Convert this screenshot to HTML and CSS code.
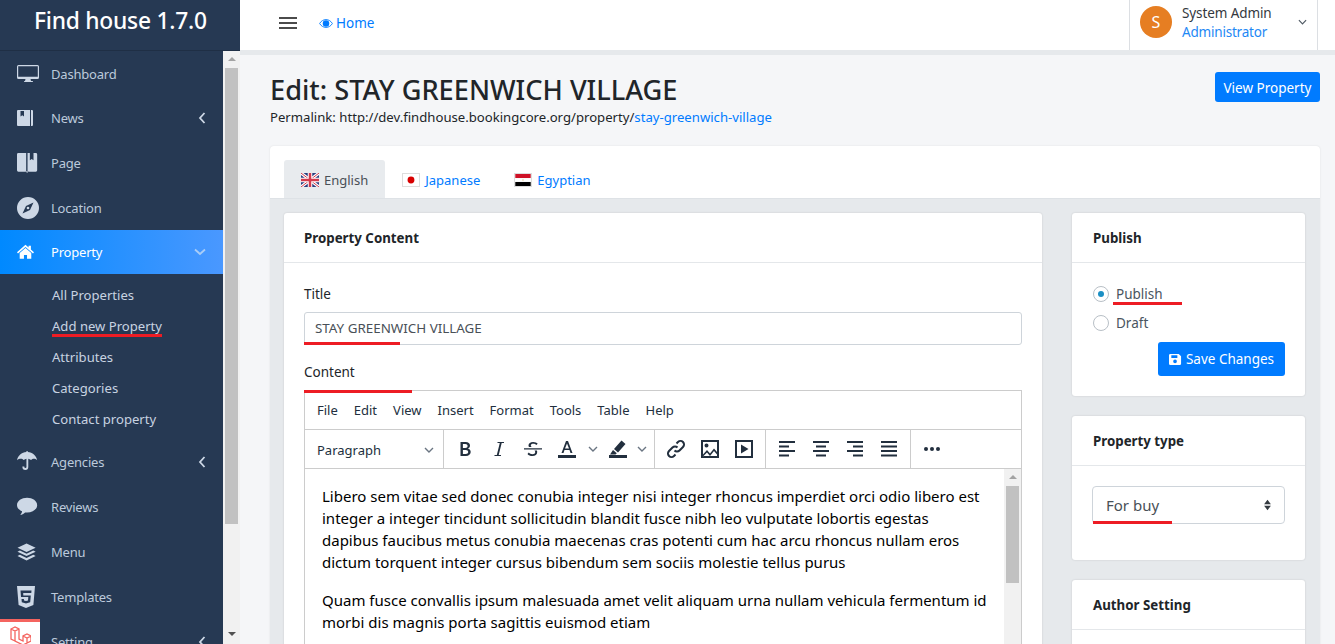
FILE: index.html
```html
<!DOCTYPE html>
<html lang="en">
<head>
  <meta charset="UTF-8">
  <title>Edit: STAY GREENWICH VILLAGE</title>
  <link rel="stylesheet" href="styles.css">
</head>
<body>
<div class="page">
  <!-- Sidebar -->
  <aside class="sidebar">
    <div class="brand">Find house 1.7.0</div>
    <div class="side-body">
      <nav class="side-nav">
        <a class="nav-item">
          <svg class="nav-icon" viewBox="0 0 22 18"><path fill-rule="evenodd" d="M1.500 0h19A1.500 1.500 0 0 1 22 1.500v11a1.500 1.500 0 0 1-1.500 1.500h-7l.5 2h1.500a.5.5 0 0 1 0 1h-8a.5.5 0 0 1 0-1H8l.5-2h-7A1.500 1.500 0 0 1 0 12.500v-11A1.500 1.500 0 0 1 1.500 0zM1.200 1.200v10.600h19.600V1.200z"/></svg>
          <span>Dashboard</span>
        </a>
        <a class="nav-item">
          <svg class="nav-icon" viewBox="0 -3 22 22"><path fill-rule="evenodd" d="M1 0h12v16H1a1 1 0 0 1-1-1V1a1 1 0 0 1 1-1zm2.500 1v5.500l1.800-1.300L7 6.500V1zM14 0h1a1 1 0 0 1 1 1v14a1 1 0 0 1-1 1h-1z"/></svg>
          <span>News</span>
          <svg class="nav-arrow" viewBox="0 0 8 12"><path d="M6.500 1 2 6l4.500 5"/></svg>
        </a>
        <a class="nav-item">
          <svg class="nav-icon" viewBox="0 -1 24 24"><path fill-rule="evenodd" d="M1.500 0H10v20.500H1.500A1.500 1.500 0 0 1 0 19V1.500A1.500 1.500 0 0 1 1.500 0zM11.500 0H14v8l2-1.500L18 8V0h2.500A1.500 1.500 0 0 1 22 1.500V19a1.500 1.500 0 0 1-1.500 1.500h-9zM9.500 20h3l-1.500 2z"/></svg>
          <span>Page</span>
        </a>
        <a class="nav-item">
          <svg class="nav-icon" viewBox="0 0 22 22"><path fill-rule="evenodd" d="M11 0a11 11 0 1 1 0 22 11 11 0 0 1 0-22zM16.500 5.500 9 9l-3.500 7.500L13 13z"/><circle cx="11" cy="11" r="1.300"/></svg>
          <span>Location</span>
        </a>
        <a class="nav-item nav-item-active">
          <svg class="nav-icon" viewBox="0 -5 28.500 28.500"><path d="M11 0 15 3.400V1h3v5.100l4 3.500-1.300 1.500L11 2.800 1.300 11.100 0 9.600zM3.500 10.600 11 4.200l7.500 6.400V18H13v-5H9v5H3.500z"/></svg>
          <span>Property</span>
          <svg class="nav-arrow nav-arrow-open" viewBox="0 0 12 8"><path d="M1 1.500 6 6l5-4.500"/></svg>
        </a>
        <div class="sub-nav">
          <a>All Properties</a>
          <a class="marked">Add new Property</a>
          <a>Attributes</a>
          <a>Categories</a>
          <a>Contact property</a>
        </div>
        <a class="nav-item">
          <svg class="nav-icon" viewBox="0 0 24 24"><path d="M10.300 0h1.400v1.100C17 1.500 21 5 22 10c-1-1-2.500-1.500-3.700-1.500-1.100 0-2 .4-3 1.400-1-1-2-1.400-3-1.500v9.100a3.200 3.200 0 0 1-6.400 0v-.7H8v.7a1.100 1.100 0 0 0 2.300 0V8.400c-1 .1-2 .5-3 1.500-1-1-1.900-1.400-3-1.400C3 8.500 1 9 0 10 1 5 5 1.500 10.300 1.100z"/></svg>
          <span>Agencies</span>
          <svg class="nav-arrow" viewBox="0 0 8 12"><path d="M6.500 1 2 6l4.500 5"/></svg>
        </a>
        <a class="nav-item">
          <svg class="nav-icon" viewBox="0 -2 24 24"><path d="M11 0c6 0 11 3.500 11 8s-5 8-11 8c-.7 0-1.500 0-2.200-.1C7.200 17.600 5.300 18.400 3.500 18.700c1-1 1.800-2.200 2-4C2.300 13.300 0 10.800 0 8c0-4.500 5-8 11-8z"/></svg>
          <span>Reviews</span>
        </a>
        <a class="nav-item">
          <svg class="nav-icon" viewBox="0 -2.500 23 23"><path d="M10 0l9.500 4.500L10 9 .5 4.500zM3 7.500l7 3.300 7-3.300 2.500 1.300L10 13.300.5 8.800zM3 12l7 3.300 7-3.300 2.500 1.200L10 17.800.5 13.200z"/></svg>
          <span>Menu</span>
        </a>
        <a class="nav-item">
          <svg class="nav-icon" viewBox="2 0 20 22"><path fill-rule="evenodd" d="M1 0h18l-1.600 19L10 22l-7.400-3zM15.500 4.500h-11l.5 6.500h7.300l-.3 3.400-2 .6-2-.6-.1-1.500H5.500l.3 3.300 4.200 1.200 4.200-1.200.6-6.800H7.300l-.1-2.300h8.100z"/></svg>
          <span>Templates</span>
        </a>
        <a class="nav-item">
          <svg class="nav-icon" viewBox="0 0 22 22"><circle cx="11" cy="11" r="10"/></svg>
          <span>Setting</span>
          <svg class="nav-arrow" viewBox="0 0 8 12"><path d="M6.500 1 2 6l4.500 5"/></svg>
        </a>
      </nav>
      <div class="side-scroll">
        <span class="scroll-up"></span>
        <span class="scroll-thumb"></span>
        <span class="scroll-down"></span>
      </div>
    </div>
  </aside>

  <!-- Main column -->
  <div class="main">
    <header class="topbar">
      <button class="burger"><span></span><span></span><span></span></button>
      <a class="home-link">
        <svg class="eye" viewBox="0 0 16 12"><path class="eye-rim" d="M.7 6C2.400 3.200 5 1.500 8 1.500s5.600 1.700 7.300 4.500c-1.700 2.800-4.300 4.500-7.300 4.500S2.400 8.800.7 6z"/><circle cx="8" cy="6" r="3.700"/></svg>
        Home
      </a>
      <div class="user-box">
        <span class="avatar">S</span>
        <div class="user-text">
          <div class="user-name">System Admin</div>
          <div class="user-role">Administrator</div>
        </div>
        <svg class="user-caret" viewBox="0 0 10 6"><path d="M1 1l4 4 4-4"/></svg>
      </div>
    </header>

    <div class="content">
      <div class="page-head">
        <div>
          <h1>Edit: STAY GREENWICH VILLAGE</h1>
          <div class="permalink">Permalink: http://dev.findhouse.bookingcore.org/property/<a>stay-greenwich-village</a></div>
        </div>
        <button class="btn view-btn">View Property</button>
      </div>

      <div class="lang-card">
        <div class="tabs">
          <a class="tab tab-active">
            <svg class="flag" viewBox="0 0 18 14"><rect width="18" height="14" fill="#2b3f80"/><path d="M0 0l18 14M18 0 0 14" stroke="#fff" stroke-width="3"/><path d="M0 0l18 14M18 0 0 14" stroke="#d3394c" stroke-width="1"/><path d="M9 0v14M0 7h18" stroke="#fff" stroke-width="4.500"/><path d="M9 0v14M0 7h18" stroke="#d3394c" stroke-width="2.500"/></svg>
            English
          </a>
          <a class="tab">
            <svg class="flag flag-box" viewBox="0 0 18 14"><rect width="18" height="14" fill="#fff"/><circle cx="9" cy="7" r="4" fill="#d80000"/></svg>
            Japanese
          </a>
          <a class="tab">
            <svg class="flag flag-box" viewBox="0 0 18 14"><rect width="18" height="14" fill="#fff"/><rect width="18" height="4.700" fill="#ce1126"/><rect y="9.300" width="18" height="4.700" fill="#000"/><rect x="8.500" y="6" width="1" height="2" fill="#e0c080"/></svg>
            Egyptian
          </a>
        </div>

        <div class="tab-panel">
          <div class="col-main">
            <section class="card">
              <div class="card-head">Property Content</div>
              <div class="card-body">
                <label class="field-label">Title</label>
                <div class="input-wrap">
                  <div class="text-input">STAY GREENWICH VILLAGE</div>
                  <span class="mark mark-title"></span>
                </div>
                <label class="field-label content-label">Content</label>
                <div class="editor">
                  <span class="mark mark-content"></span>
                  <div class="menubar">
                    <span>File</span><span>Edit</span><span>View</span><span>Insert</span><span>Format</span><span>Tools</span><span>Table</span><span>Help</span>
                  </div>
                  <div class="toolbar">
                    <div class="tool-group format-group">
                      <span>Paragraph</span>
                      <svg class="tool-caret" viewBox="0 0 10 6"><path d="M1 1l4 4 4-4"/></svg>
                    </div>
                    <div class="tool-group style-group">
                      <svg class="tool" viewBox="0 0 24 24"><path class="solid" fill-rule="evenodd" d="M7.500 5h5.200c2.600 0 4.300 1.400 4.300 3.500 0 1.500-.8 2.600-2.100 3.100 1.700.4 2.800 1.700 2.800 3.500 0 2.400-1.900 3.900-4.800 3.900H7.500zm2.400 2v4h2.400c1.500 0 2.300-.7 2.300-2s-.8-2-2.300-2zm0 6v4h2.800c1.600 0 2.500-.7 2.500-2s-.9-2-2.500-2z"/></svg>
                      <svg class="tool" viewBox="0 0 24 24"><path class="solid" d="M10.500 5H17v1h-2.300l-3 12H14v1H7.500v-1h2.300l3-12h-2.300z"/></svg>
                      <svg class="tool" viewBox="0 0 24 24"><path class="solid" d="M3 11.200h18v1.400H3zM12.200 5c2 0 3.500.7 4.500 1.800l-1.300 1.300c-.8-.9-1.900-1.400-3.200-1.400-1.500 0-2.400.7-2.400 1.700 0 .7.300 1.100.9 1.500H8c-.3-.5-.5-1-.5-1.700C7.500 6.400 9.400 5 12.200 5zm3.700 8.500c.2.400.3.900.3 1.400 0 2.400-1.900 4.100-4.800 4.100-2.100 0-3.800-.8-4.900-2.100l1.300-1.300c.9 1 2.100 1.600 3.600 1.600 1.700 0 2.800-.8 2.800-2 0-.7-.2-1.200-.7-1.700z"/></svg>
                      <svg class="tool tool-narrow" viewBox="0 0 24 24"><path class="solid" fill-rule="evenodd" d="M3 18h18v3H3zM11 4h2l4.500 12h-2l-1-3H9.500l-1 3h-2zm1 2.500L10 11.500h4z"/></svg>
                      <svg class="tool-caret small" viewBox="0 0 10 6"><path d="M1 1l4 4 4-4"/></svg>
                      <svg class="tool tool-narrow" viewBox="0 0 24 24"><path class="solid" d="M3 18h18v3H3zM15.500 3.500l4 3.500-7.500 8.500-4-3.500zM7 13l3.800 3.300-1.300 1.200H4z"/></svg>
                      <svg class="tool-caret small" viewBox="0 0 10 6"><path d="M1 1l4 4 4-4"/></svg>
                    </div>
                    <div class="tool-group insert-group">
                      <svg class="tool" viewBox="0 0 24 24"><path class="line" d="M10.500 13.500a3.500 3.500 0 0 0 5 0l3.500-3.500a3.500 3.500 0 0 0-5-5l-1.500 1.500M13.500 10.500a3.500 3.500 0 0 0-5 0L5 14a3.500 3.500 0 0 0 5 5l1.500-1.500"/></svg>
                      <svg class="tool" viewBox="0 0 24 24"><path class="solid" fill-rule="evenodd" d="M3 3h18v18H3zm2 2v12.500l4-4.500 3 3.500 4-5 3 3.500V5zm0 14h14v-1.500l-3-3.500-4 5-3-3.500-4 4zM8.500 6.500a2 2 0 1 1 0 4 2 2 0 0 1 0-4z"/></svg>
                      <svg class="tool" viewBox="0 0 24 24"><path class="solid" fill-rule="evenodd" d="M3 3h18v18H3zm2 2v14h14V5zm4 2.500L16.500 12 9 16.500z"/></svg>
                    </div>
                    <div class="tool-group align-group">
                      <svg class="tool" viewBox="0 0 24 24"><path class="solid" d="M4 4h16v2H4zM4 8.500h10v2H4zM4 13h16v2H4zM4 17.500h10v2H4z"/></svg>
                      <svg class="tool" viewBox="0 0 24 24"><path class="solid" d="M4 4h16v2H4zM7 8.500h10v2H7zM4 13h16v2H4zM7 17.500h10v2H7z"/></svg>
                      <svg class="tool" viewBox="0 0 24 24"><path class="solid" d="M4 4h16v2H4zM10 8.500h10v2H10zM4 13h16v2H4zM10 17.500h10v2H10z"/></svg>
                      <svg class="tool" viewBox="0 0 24 24"><path class="solid" d="M4 4h16v2H4zM4 8.500h16v2H4zM4 13h16v2H4zM4 17.500h16v2H4z"/></svg>
                    </div>
                    <div class="tool-group more-group">
                      <svg class="tool" viewBox="0 0 24 24"><circle class="solid" cx="6" cy="12" r="2"/><circle class="solid" cx="12" cy="12" r="2"/><circle class="solid" cx="18" cy="12" r="2"/></svg>
                    </div>
                  </div>
                  <div class="edit-area">
                    <div class="edit-text">
                      <p>Libero sem vitae sed donec conubia integer nisi integer rhoncus imperdiet orci odio libero est<br>integer a integer tincidunt sollicitudin blandit fusce nibh leo vulputate lobortis egestas<br>dapibus faucibus metus conubia maecenas cras potenti cum hac arcu rhoncus nullam eros<br>dictum torquent integer cursus bibendum sem sociis molestie tellus purus</p>
                      <p>Quam fusce convallis ipsum malesuada amet velit aliquam urna nullam vehicula fermentum id<br>morbi dis magnis porta sagittis euismod etiam</p>
                    </div>
                    <div class="edit-scroll">
                      <span class="scroll-up"></span>
                      <span class="scroll-thumb"></span>
                    </div>
                  </div>
                </div>
              </div>
            </section>
          </div>

          <div class="col-side">
            <section class="card publish-card">
              <div class="card-head">Publish</div>
              <div class="card-body publish-body">
                <div class="radio-row"><span class="radio radio-on"></span><span class="radio-label">Publish<span class="mark mark-publish"></span></span></div>
                <div class="radio-row"><span class="radio"></span><span class="radio-label">Draft</span></div>
                <div class="save-row">
                  <button class="btn save-btn">
                    <svg class="save-icon" viewBox="0 0 14 14"><path fill-rule="evenodd" d="M1.500 1H10.500L13 3.500V11.500A1.500 1.500 0 0 1 11.500 13h-10A1.500 1.500 0 0 1 0 11.500v-9A1.500 1.500 0 0 1 1.500 1zM2.500 2.500v3h6.500v-3zM6.500 7a2 2 0 1 0 0 4 2 2 0 0 0 0-4z"/></svg>
                    Save Changes
                  </button>
                </div>
              </div>
            </section>
            <section class="card type-card">
              <div class="card-head">Property type</div>
              <div class="card-body">
                <div class="select-box">
                  <span>For buy</span>
                  <svg class="select-arrows" viewBox="0 0 10 14"><path d="M5 1l4 5H1zM5 13 1 8h8z"/></svg>
                  <span class="mark mark-select"></span>
                </div>
              </div>
            </section>
            <section class="card author-card">
              <div class="card-head">Author Setting</div>
              <div class="card-body"></div>
            </section>
          </div>
        </div>
      </div>
    </div>
  </div>

  <!-- Debug bar tab, sits over the sidebar -->
  <div class="debug-tab">
    <svg viewBox="1 0 22 22"><path d="M3 3l4-2 4 2v10l4 2 0-5 4-2 4 2v5l-8 4-8-4-4-2zM3 3l4 2 4-2M7 5v10l8 4M15 10l4 2 4-2M19 12v5"/></svg>
  </div>
</div>
</body>
</html>
```

FILE: styles.css
```css
* {
  box-sizing: border-box;
}
html, body {
  margin: 0;
  height: 100%;
  overflow: hidden;
}
body {
  font-family: "Noto Sans", Arial, sans-serif;
  font-size: 13.5px;
  color: #212529;
  background-color: #f5f6f8;
}
a {
  color: #007bff;
  text-decoration: none;
}
.page {
  display: flex;
  height: 644px;
  position: relative;
  overflow: hidden;
}

/* Sidebar */
.sidebar {
  width: 240px;
  flex: none;
  background-color: #263953;
  display: flex;
  flex-direction: column;
}
.brand {
  height: 51px;
  flex: none;
  padding: 5px 34px 0;
  color: #fff;
  font-size: 22.800px;
  font-weight: 500;
  letter-spacing: -0.25px;
  white-space: nowrap;
  border-bottom: 1px solid #1f2f45;
}
.side-body {
  flex: 1;
  display: flex;
  min-height: 0;
}
.side-nav {
  width: 223px;
  flex: none;
  padding-top: 0.2px;
  font-size: 13px;
}
.nav-item {
  display: flex;
  align-items: center;
  height: 44.750px;
  padding: 0 17px;
  color: #bccadb;
  letter-spacing: -0.2px;
}
.sub-nav ~ .nav-item {
  height: 45px;
}
.nav-icon {
  width: 22px;
  height: 22px;
  fill: #cdd8e6;
  flex: none;
  margin-right: 12px;
}
.nav-arrow {
  width: 8px;
  height: 12px;
  margin-left: auto;
  margin-right: 0;
  fill: none;
  stroke: #cdd8e6;
  stroke-width: 1.800;
}
.nav-item-active {
  color: #fff;
  background: linear-gradient(90deg, #0089ff, #4a98ff);
  height: 44px;
}
.nav-item-active .nav-icon {
  fill: #fff;
}
.nav-arrow-open {
  width: 12px;
  height: 8px;
  stroke: #a9cdf7;
}
.sub-nav {
  padding: 6px 0 4.600px 52px;
  font-size: 13.100px;
}
.sub-nav a {
  display: block;
  width: max-content;
  height: 31px;
  line-height: 30px;
  color: #c8d3e1;
  position: relative;
}
.sub-nav .marked::after {
  content: "";
  position: absolute;
  left: 0;
  right: 0;
  top: 23px;
  height: 3px;
  background-color: #ed1c24;
}
.side-scroll {
  width: 17px;
  flex: none;
  background-color: #f1f1f1;
  position: relative;
}
.scroll-up {
  display: block;
  height: 17px;
  position: relative;
}
.scroll-up::after {
  content: "";
  position: absolute;
  left: 5px;
  top: 6px;
  border-left: 4px solid transparent;
  border-right: 4px solid transparent;
  border-bottom: 4px solid #a3a3a3;
}
.scroll-thumb {
  display: block;
  width: 13px;
  height: 456px;
  margin-left: 2px;
  background-color: #c1c1c1;
}
.scroll-down {
  position: absolute;
  bottom: 0;
  left: 0;
  width: 17px;
  height: 17px;
}
.scroll-down::after {
  content: "";
  position: absolute;
  left: 5px;
  top: 5px;
  border-left: 4px solid transparent;
  border-right: 4px solid transparent;
  border-top: 4px solid #505050;
}
.debug-tab {
  position: absolute;
  left: 0;
  bottom: 0;
  width: 40px;
  height: 25px;
  background-color: #fff;
  border-top: 3px solid #f4645f;
  padding: 4px 0 0 9px;
}
.debug-tab svg {
  width: 22px;
  height: 22px;
  fill: none;
  stroke: #f4645f;
  stroke-width: 1.300;
}

/* Top bar */
.main {
  flex: 1;
  min-width: 0;
}
.topbar {
  height: 55px;
  display: flex;
  align-items: flex-start;
  background-color: #fff;
  border-bottom: 5px solid #e6e9ec;
  padding-left: 39px;
}
.burger {
  width: 18px;
  margin-top: 17px;
  padding: 0;
  border: none;
  background: none;
  display: flex;
  flex-direction: column;
  gap: 3px;
}
.burger span {
  height: 2px;
  background-color: #4b4b4b;
}
.home-link {
  display: flex;
  align-items: center;
  margin-left: 22px;
  height: 46px;
  gap: 3px;
  font-size: 13.5px;
}
.eye {
  width: 14px;
  height: 11px;
  fill: #007bff;
}
.eye-rim {
  fill: none;
  stroke: #007bff;
  stroke-width: 1;
}
.user-box {
  margin-left: auto;
  margin-right: 17px;
  width: 189px;
  height: 50px;
  display: flex;
  align-items: flex-start;
  border-left: 1px solid #dcdfe3;
  border-right: 1px solid #dcdfe3;
  padding: 6px 0 0 10px;
}
.avatar {
  width: 32px;
  height: 32px;
  border-radius: 50%;
  background-color: #e67e22;
  color: #fff;
  font-size: 16px;
  display: flex;
  align-items: center;
  justify-content: center;
  flex: none;
}
.user-text {
  margin-left: 10px;
  line-height: 19px;
  margin-top: -2px;
}
.user-name {
  color: #33383d;
  letter-spacing: -0.1px;
}
.user-role {
  color: #1e88f5;
  letter-spacing: -0.2px;
}
.user-caret {
  width: 9px;
  height: 6px;
  margin: 13px 10px 0 auto;
  fill: none;
  stroke: #505a64;
  stroke-width: 1.300;
}

/* Page content */
.content {
  padding: 16px 15px 0 30px;
}
.page-head {
  display: flex;
  justify-content: space-between;
  align-items: flex-start;
  height: 75px;
}
h1 {
  margin: 0;
  font-size: 27.200px;
  font-weight: 500;
  line-height: 37px;
  color: #212529;
}
.permalink {
  font-size: 13.150px;
  line-height: 18px;
}
.btn {
  border: none;
  border-radius: 3px;
  background-color: #007bff;
  color: #fff;
  font-family: inherit;
  font-size: 13.5px;
  padding: 0;
}
.view-btn {
  width: 105px;
  height: 30px;
  margin-top: 1px;
  padding-top: 2px;
}
.lang-card {
  background-color: #fff;
  border-radius: 4px;
  box-shadow: 0 0 2px rgba(0, 0, 0, 0.1);
}
.tabs {
  display: flex;
  padding: 14px 14px 0;
  height: 53px;
  font-size: 13px;
  border-bottom: 1px solid #dee2e6;
}
.tab {
  display: flex;
  align-items: center;
  gap: 5px;
  padding: 2px 17px 0;
  height: 38px;
  border-radius: 3px 3px 0 0;
}
.tab-active {
  background-color: #e8ebee;
  color: #495057;
}
.flag {
  width: 18px;
  height: 14px;
  flex: none;
}
.flag-box {
  border: 1px solid #ddd;
}
.tab-panel {
  background-color: #e6e9ec;
  padding: 14px 14px 0;
  display: flex;
  gap: 30px;
  height: 460px;
  border-radius: 0 0 4px 4px;
}
.col-main {
  width: 758px;
  flex: none;
}
.col-side {
  width: 233px;
  flex: none;
}

/* Cards */
.card {
  background-color: #fff;
  border-radius: 3px;
  box-shadow: 0 0 2px rgba(0, 0, 0, 0.15);
  margin-bottom: 20px;
}
.card-head {
  height: 50px;
  line-height: 50px;
  padding-left: 20px;
  font-weight: 700;
  font-size: 13.300px;
  border-bottom: 1px solid #e4e7ea;
}
.col-side .card-head {
  padding-left: 21px;
}
.card-body {
  padding: 20px 20px 0;
}
.field-label {
  display: block;
  line-height: 22px;
  margin-bottom: 7px;
}
.input-wrap {
  position: relative;
}
.text-input {
  height: 33px;
  line-height: 31px;
  padding-left: 10px;
  border: 1px solid #ced4da;
  border-radius: 3px;
  color: #495057;
  font-size: 13.400px;
}
.mark {
  position: absolute;
  height: 3px;
  background-color: #ed1c24;
}
.mark-title {
  left: 0;
  width: 96px;
  bottom: 0;
}
.content-label {
  margin-top: 16px;
  margin-bottom: 7px;
}

/* Editor */
.editor {
  position: relative;
  border: 1px solid #ccc;
  height: 400px;
}
.mark-content {
  left: -1px;
  top: -1px;
  width: 108px;
}
.menubar {
  height: 39px;
  display: flex;
  align-items: center;
  padding-left: 12px;
  gap: 16px;
  border-bottom: 1px solid #ccc;
  color: #222f3e;
  font-size: 13px;
}
.toolbar {
  height: 39px;
  display: flex;
  border-bottom: 1px solid #ccc;
}
.tool-group {
  display: flex;
  align-items: center;
  border-right: 1px solid #ccc;
  height: 38px;
}
.format-group {
  width: 139px;
  padding: 1px 9px 0 12px;
  justify-content: space-between;
  color: #222f3e;
  font-size: 13px;
}
.style-group {
  width: 211px;
  padding-left: 4px;
}
.insert-group {
  width: 111px;
  padding-left: 4px;
}
.align-group {
  width: 145px;
  padding-left: 4px;
}
.more-group {
  padding-left: 4px;
  border-right: none;
}
.tool {
  width: 24px;
  height: 24px;
  margin: 0 5px;
  flex: none;
}
.tool-narrow {
  margin-right: 7px;
}
.solid {
  fill: #222f3e;
}
.line {
  fill: none;
  stroke: #222f3e;
  stroke-width: 2;
}
.tool-caret {
  width: 10px;
  height: 6px;
  fill: none;
  stroke: #6a7582;
  stroke-width: 1.400;
}
.tool-caret.small {
  margin: 0 3px 0 2px;
}
.tool-caret.small:last-child {
  margin-left: 0;
}
.edit-area {
  display: flex;
  height: 320px;
}
.edit-text {
  flex: 1;
  padding: 16px 0 0 17px;
  font-size: 15px;
  line-height: 22px;
  white-space: nowrap;
  color: #000;
}
.edit-text p {
  margin: 0 0 16px;
}
.edit-scroll {
  width: 17px;
  flex: none;
  background-color: #f1f1f1;
}
.edit-scroll .scroll-thumb {
  height: 97px;
}

/* Publish */
.publish-card {
  height: 183px;
}
.publish-body {
  padding-top: 16px;
}
.radio-row {
  display: flex;
  align-items: center;
  height: 29px;
  color: #4a5560;
}
.radio {
  width: 16px;
  height: 16px;
  margin-left: 1px;
  border-radius: 50%;
  border: 1px solid #b8bfc6;
  background-color: #fff;
  position: relative;
}
.radio-on::after {
  content: "";
  position: absolute;
  left: 4px;
  top: 4px;
  width: 6px;
  height: 6px;
  border-radius: 50%;
  background-color: #1b8fc4;
}
.radio-label {
  margin-left: 7px;
  position: relative;
}
.mark-publish {
  left: -3px;
  right: -19px;
  bottom: -2px;
}
.save-row {
  display: flex;
  justify-content: flex-end;
  margin-top: 5px;
}
.save-btn {
  width: 127px;
  height: 34px;
  display: flex;
  align-items: center;
  justify-content: center;
  gap: 4px;
}
.save-icon {
  width: 13px;
  height: 13px;
  fill: #fff;
}

/* Property type */
.type-card {
  height: 144px;
}
.select-box {
  position: relative;
  height: 38px;
  display: flex;
  align-items: center;
  justify-content: space-between;
  padding: 0 12px 0 13px;
  border: 1px solid #ced4da;
  border-radius: 4px;
  font-size: 15px;
  color: #495057;
}
.select-arrows {
  width: 9px;
  height: 12px;
  fill: #343a40;
}
.mark-select {
  left: 0;
  width: 79px;
  bottom: -1px;
}
```
